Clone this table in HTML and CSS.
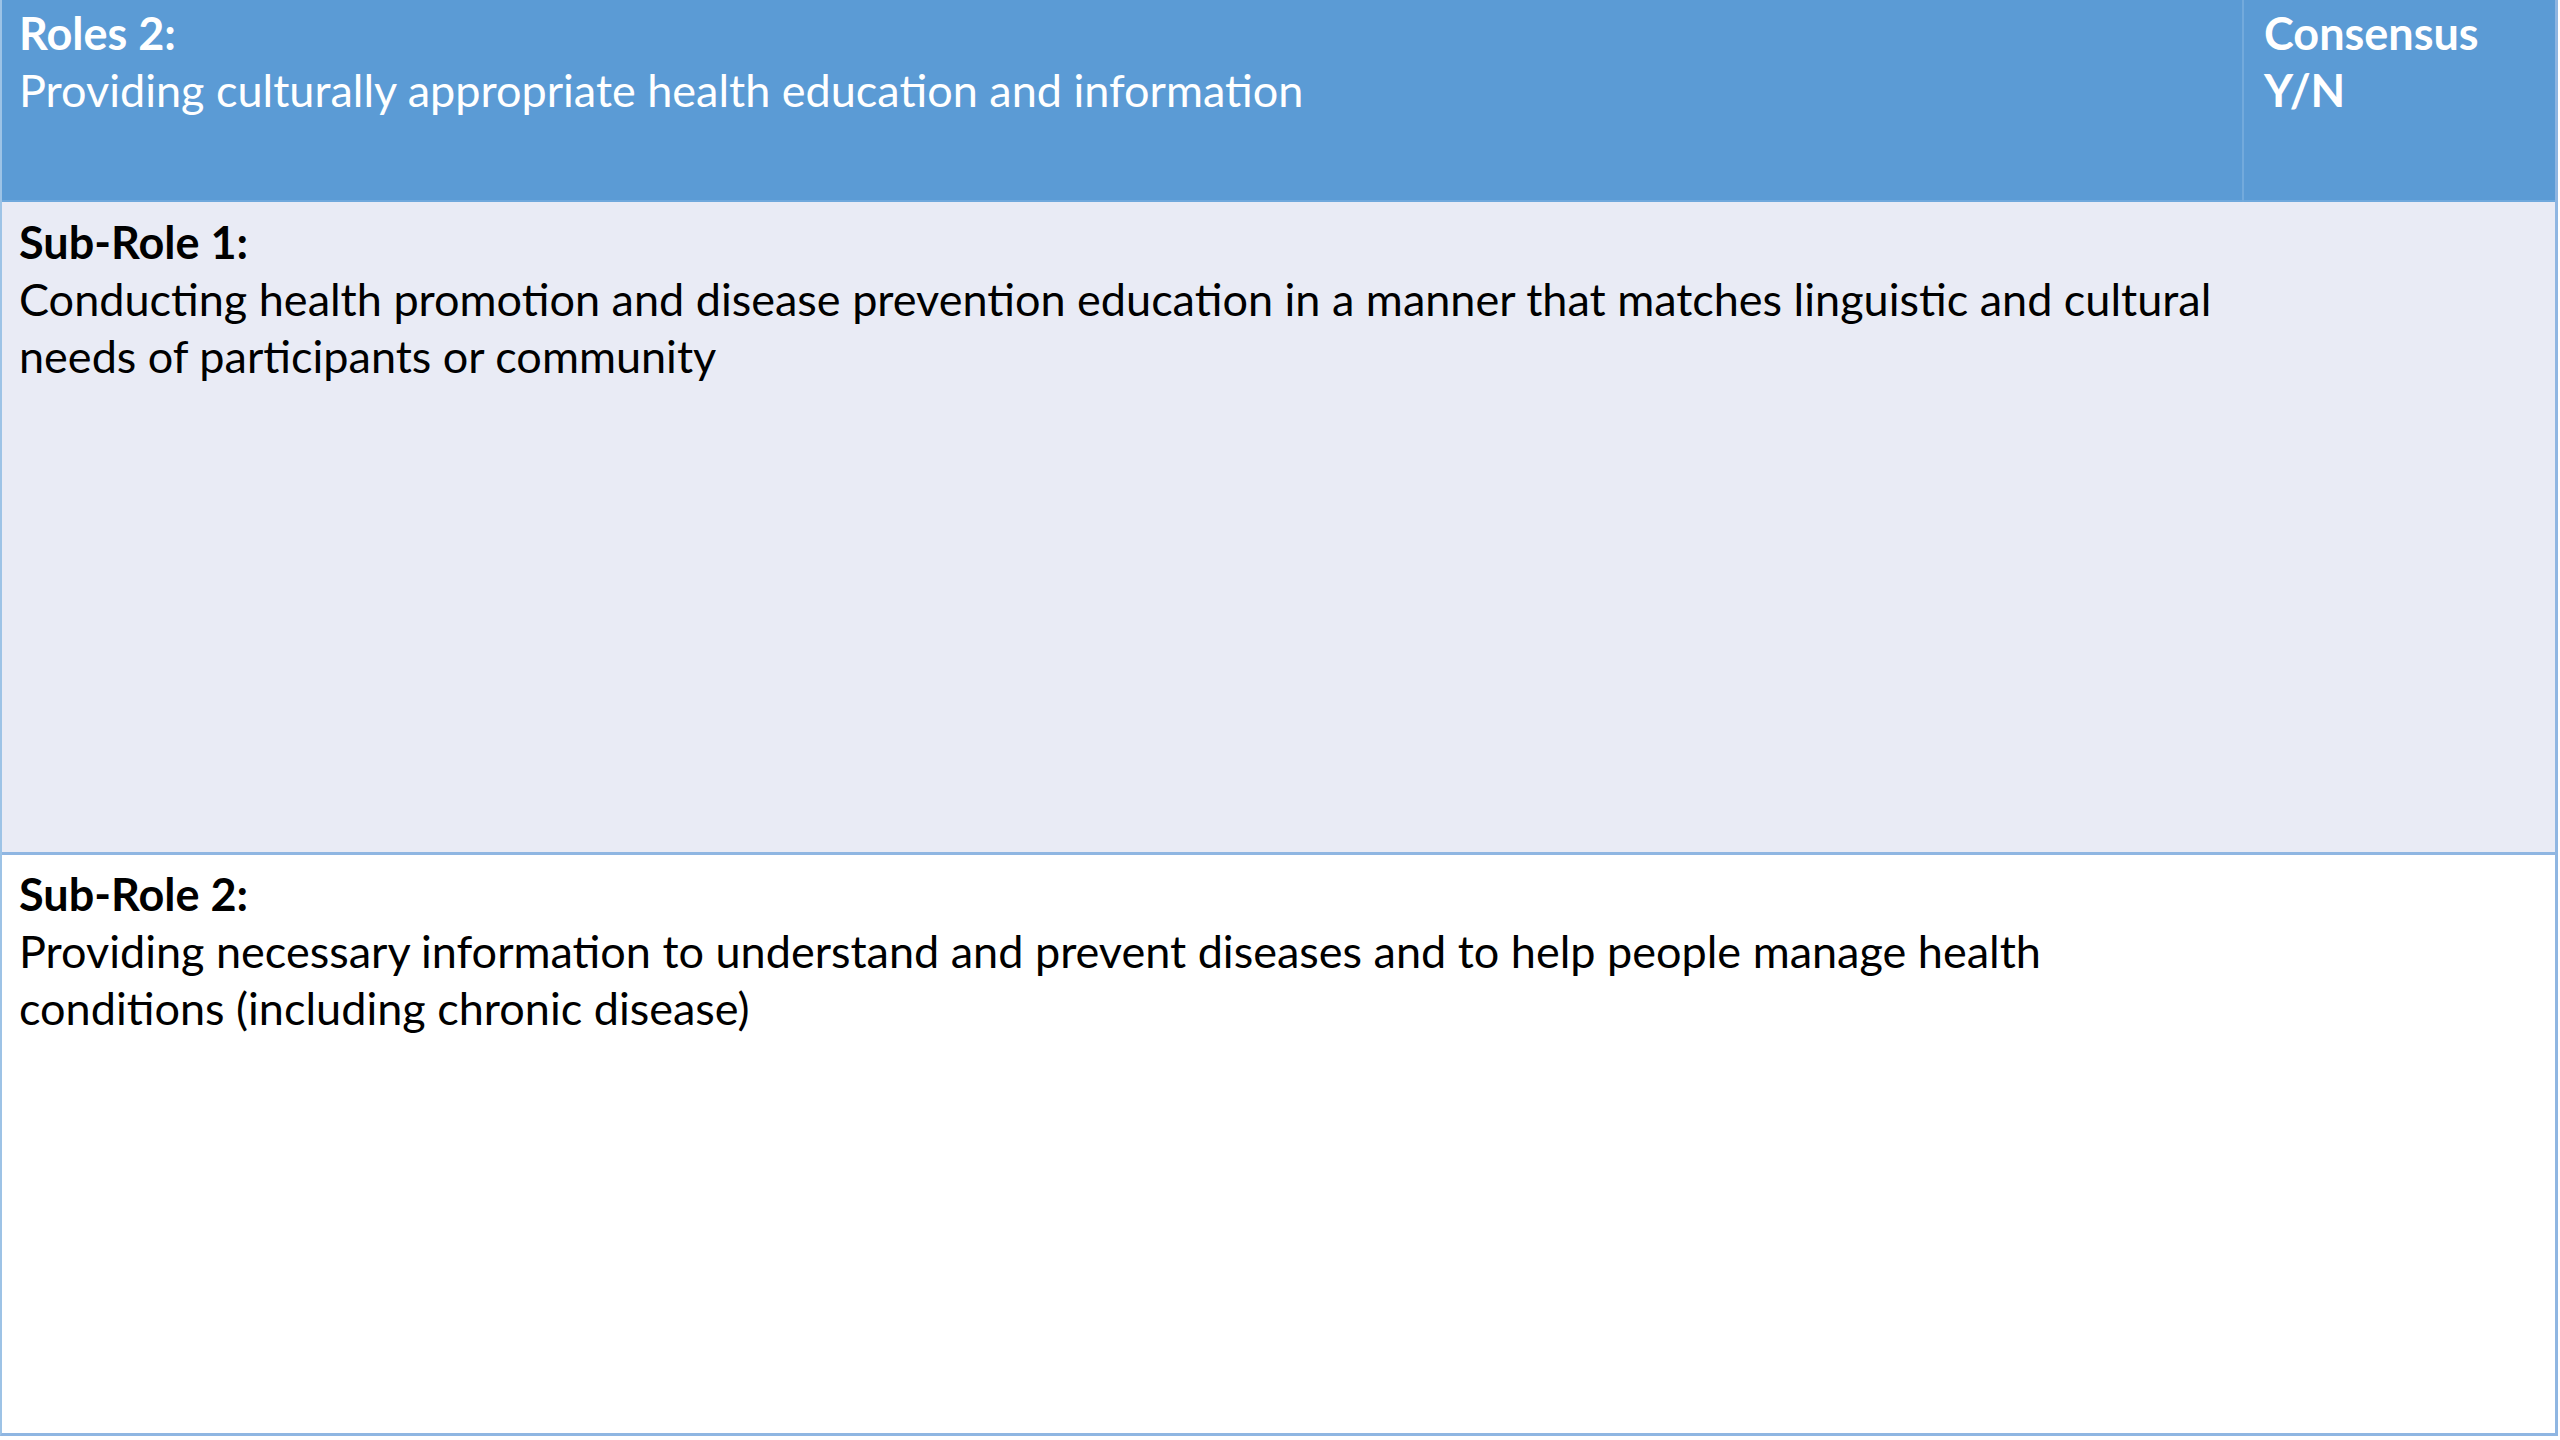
FILE: index.html
```html
<!DOCTYPE html>
<html lang="en">
<head>
<meta charset="utf-8">
<title>Roles 2</title>
<link rel="stylesheet" href="styles.css">
</head>
<body>
<div class="table">
  <div class="row head">
    <div class="cell main">
      <div class="title">Roles 2:</div>
      <div class="text">Providing culturally appropriate health education and information</div>
    </div>
    <div class="cell side">
      <div class="title">Consensus<br>Y/N</div>
    </div>
  </div>
  <div class="row band">
    <div class="cell main">
      <div class="title">Sub-Role 1:</div>
      <div class="text">Conducting health promotion and disease prevention education in a manner that matches linguistic and cultural needs of participants or community</div>
    </div>
    <div class="cell side"></div>
  </div>
  <div class="row plain">
    <div class="cell main">
      <div class="title">Sub-Role 2:</div>
      <div class="text">Providing necessary information to understand and prevent diseases and to help people manage health conditions (including chronic disease)</div>
    </div>
    <div class="cell side"></div>
  </div>
</div>
</body>
</html>
```

FILE: styles.css
```css
html, body {
  margin: 0;
  padding: 0;
  background: #ffffff;
}

body {
  width: 2560px;
  height: 1440px;
  overflow: hidden;
  font-family: Lato, "Open Sans", "Liberation Sans", sans-serif;
  font-size: 45px;
  line-height: 57px;
  color: #000000;
}

.table {
  width: 2558px;
  height: 1436px;
  display: grid;
  grid-template-rows: 202px 653px 578px;
  border-left: 2px solid #9dc3e6;
  border-right: 3px solid #8fb6e2;
  border-bottom: 3px solid #8fb6e2;
  box-sizing: border-box;
}

.row {
  display: grid;
  grid-template-columns: 2240px 1fr;
}

.cell {
  padding: 5px 17px 0;
  box-sizing: border-box;
}

.title {
  font-weight: 700;
}

.head {
  background: #5b9bd5;
  color: #ffffff;
  box-shadow: inset 0 -2px 0 #6fa8dc;
}

.head .side {
  border-left: 2px solid #73aadc;
  padding-left: 20px;
}

.band {
  background: #e9ebf5;
  border-bottom: 3px solid #8fb6e2;
}

.band .cell {
  padding-top: 12px;
}

.plain {
  background: #ffffff;
}

.plain .cell {
  padding-top: 11px;
}
```
